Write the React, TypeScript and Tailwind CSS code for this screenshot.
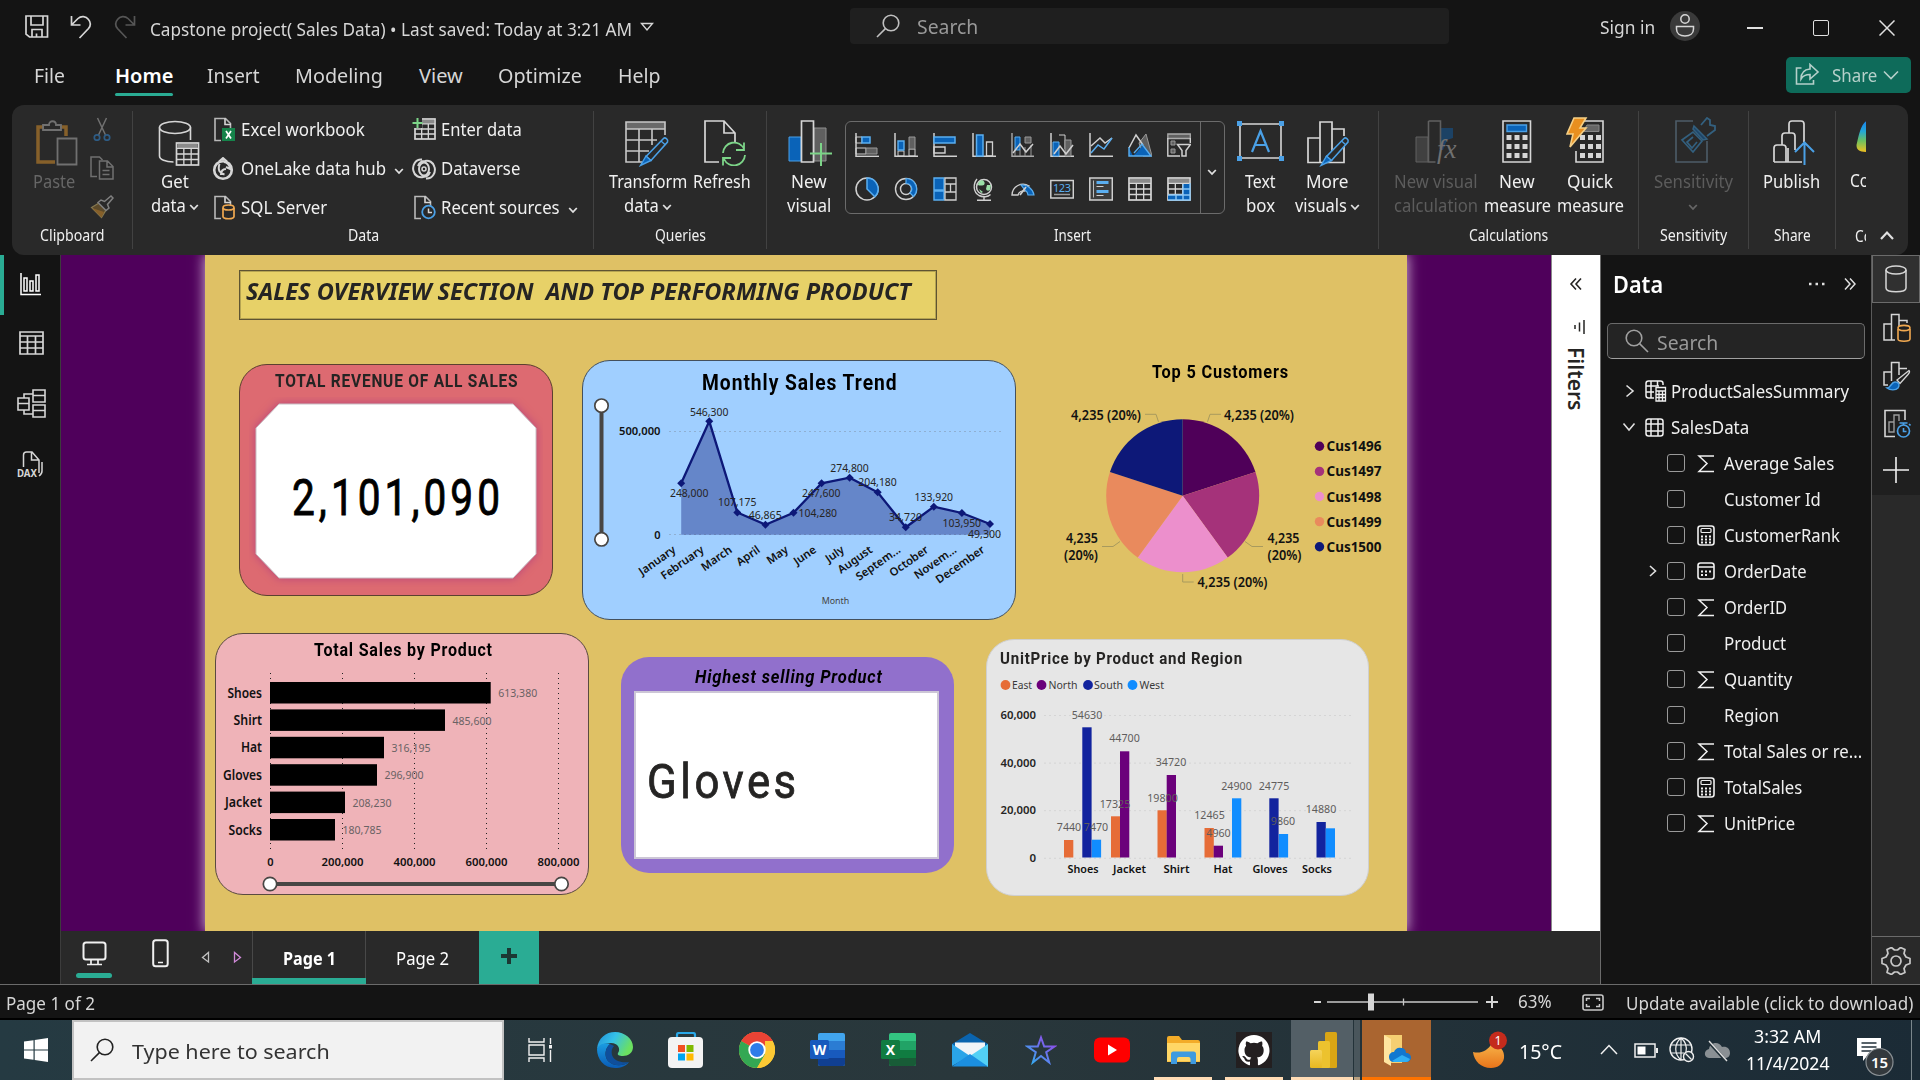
import React, { useLayoutEffect, useRef, useState } from "react";

type Kids = { children?: React.ReactNode };

/* One line of text condensed or widened so that it takes exactly w pixels. */
function Fit({ w, children, className = "" }: { w: number; className?: string } & Kids) {
  const ref = useRef<HTMLSpanElement>(null);
  const [k, setK] = useState(1);
  useLayoutEffect(() => {
    if (ref.current && ref.current.offsetWidth) setK(w / ref.current.offsetWidth);
  }, [w]);
  return (
    <span className={"inline-flex shrink-0 items-center " + className} style={{ width: w }}>
      <span ref={ref} className="shrink-0 origin-left whitespace-pre" style={{ transform: `scaleX(${k})` }}>
        {children}
      </span>
    </span>
  );
}

function S({ w, h, className = "", children }: { w: number; h: number; className?: string } & Kids) {
  return (
    <svg width={w} height={h} viewBox={`0 0 ${w} ${h}`} fill="none" className={"shrink-0 " + className}>
      {children}
    </svg>
  );
}

const Chev = ({ className = "", c = "#e0e0e0" }: { className?: string; c?: string }) => (
  <S w={10} h={8} className={className}>
    <path d="M1.2 2l3.8 4 3.8-4" stroke={c} strokeWidth="1.8" />
  </S>
);

const Lens = ({ c, flip = false }: { c: string; flip?: boolean }) => (
  <S w={24} h={24} className={flip ? "-scale-x-100" : ""}>
    <circle cx="15" cy="9" r="7.8" stroke={c} strokeWidth="1.6" />
    <path d="M9.4 14.6L1 23" stroke={c} strokeWidth="1.6" />
  </S>
);

/* ---------- title bar ---------- */

function TitleBar() {
  return (
    <div className="flex h-[54px] items-start">
      <S w={24} h={24} className="ml-[25px] mt-[15px]">
        <path d="M1 1h21.500v21H4.500L1 19.200z M6 1v9h12V1 M7 22v-7.500h10V22 M11.500 18.500V22" stroke="#d6d6d6" strokeWidth="1.700" />
      </S>
      <S w={22} h={24} className="ml-[21px] mt-[15px]">
        <path d="M1.500 1v9h9 M1.500 10L8 3.500a7 7 0 0 1 10.500 1c2.500 3 2 6.500 0 9L9.500 23" stroke="#d6d6d6" strokeWidth="1.700" />
      </S>
      <S w={22} h={24} className="ml-[22px] mt-[15px]">
        <path d="M20.500 1v9h-9 M20.500 10L14 3.500a7 7 0 0 0-10.500 1c-2.500 3-2 6.500 0 9L12.500 23" stroke="#565656" strokeWidth="1.700" />
      </S>
      <Fit w={482} className="ml-[14px] mt-[15px] h-[28px] text-[17.5px] text-[#d6d6d6]">
        Capstone project( Sales Data) • Last saved: Today at 3:21 AM
      </Fit>
      <S w={14} h={10} className="ml-[8px] mt-[22px]">
        <path d="M1.500 1.500h11L7 8z" stroke="#d6d6d6" strokeWidth="1.400" />
      </S>
      <div className="ml-[196px] mt-[8px] flex h-[36px] w-[599px] items-center rounded bg-[#1f1f1f] pl-[26px]">
        <Lens c="#c0c0c0" />
        <Fit w={61} className="ml-[17px] mt-[2px] text-[20px] text-[#999]">Search</Fit>
      </div>
      <Fit w={55} className="ml-[151px] mt-[13px] h-[28px] text-[18px] text-[#d6d6d6]">Sign in</Fit>
      <S w={30} h={30} className="ml-[15px] mt-[11px]">
        <circle cx="15" cy="15" r="15" fill="#3a3a3a" />
        <circle cx="15" cy="8" r="4.200" stroke="#d6d6d6" strokeWidth="1.500" />
        <path d="M6.500 15.500h17v2.500c0 4.500-3.500 7-8.500 7s-8.500-2.500-8.500-7z" stroke="#d6d6d6" strokeWidth="1.500" />
      </S>
      <div className="ml-[47px] mt-[27px] h-[1.500px] w-[16px] bg-[#e0e0e0]" />
      <div className="ml-[50px] mt-[20px] h-[16px] w-[16px] rounded-[2px] border-[1.500px] border-[#e0e0e0]" />
      <S w={16} h={16} className="ml-[50px] mt-[20px]">
        <path d="M.5.5l15 15M15.500.5l-15 15" stroke="#e0e0e0" strokeWidth="1.500" />
      </S>
    </div>
  );
}

function MenuBar() {
  return (
    <div className="flex h-[51px] items-start text-[20px] text-[#d6d6d6]">
      <Fit w={31} className="ml-[34px] h-[44px]">File</Fit>
      <div className="ml-[50px] flex flex-col">
        <Fit w={58} className="h-[39px] pt-[5px] font-semibold text-white">Home</Fit>
        <div className="h-[3px] rounded-sm bg-[#2aac94]" />
      </div>
      <Fit w={52} className="ml-[34px] h-[44px]">Insert</Fit>
      <Fit w={88} className="ml-[36px] h-[44px]">Modeling</Fit>
      <Fit w={44} className="ml-[36px] h-[44px]">View</Fit>
      <Fit w={84} className="ml-[35px] h-[44px]">Optimize</Fit>
      <Fit w={43} className="ml-[36px] h-[44px]">Help</Fit>
      <div className="ml-auto mr-[9px] mt-[3px] flex h-[36px] w-[125px] items-center rounded-[5px] bg-[#0e6b5a] pl-[9px] text-[18px] text-[#b5d0ca]">
        <S w={25} h={24}>
          <path d="M6.500 5H1.500v16h17v-4" stroke="#b5d0ca" strokeWidth="1.600" />
          <path d="M15 1.500l8 7.500-8 7v-4.500c-4 0-7 1-9 4.500 0-6 3.500-9.500 9-10z" stroke="#b5d0ca" strokeWidth="1.600" />
        </S>
        <Fit w={45} className="ml-[12px]">Share</Fit>
        <S w={16} h={10} className="ml-[6px]">
          <path d="M1 1.500l7 7 7-7" stroke="#b5d0ca" strokeWidth="1.600" />
        </S>
      </div>
    </div>
  );
}

/* ---------- ribbon ---------- */

const Group = ({ className, label, lw, children }: { className: string; label: string; lw: number } & Kids) => (
  <div className={"flex shrink-0 flex-col " + className}>
    <div className="flex h-[119px] items-start">{children}</div>
    <div className="flex h-[24px] justify-center text-[15.500px]">
      <Fit w={lw}>{label}</Fit>
    </div>
  </div>
);
const Rule = () => <div className="mt-[6px] h-[138px] w-px shrink-0 bg-[#424242]" />;

function Big({ className, icon, a, aw, b, bw, chev }: { className: string; icon: React.ReactNode; a: string; aw: number; b?: string; bw?: number; chev?: boolean }) {
  return (
    <div className={"flex shrink-0 flex-col items-center pt-[15px] text-[18px] leading-[24px] " + className}>
      <div className="mb-[4px] flex h-[45px] items-start justify-center">{icon}</div>
      <Fit w={aw} className="h-[24px]">{a}</Fit>
      <div className="flex h-[24px] items-center gap-[3px]">
        {b && <Fit w={bw || 40}>{b}</Fit>}
        {chev && <Chev className="mt-[3px]" c={b ? "#e0e0e0" : "#666"} />}
      </div>
    </div>
  );
}

const Row = ({ icon, w, chev, children }: { icon: React.ReactNode; w: number; chev?: boolean } & Kids) => (
  <div className="flex h-[39px] items-center">
    <div className="flex w-[24px] justify-center">{icon}</div>
    <Fit w={w} className="ml-[5px]">{children}</Fit>
    {chev && <Chev className="ml-[8px] mt-[4px]" />}
  </div>
);

const Doc = ({ children }: Kids) => (
  <S w={24} h={25}>
    <path d="M9 23.500H3V1.500h10.500l5 5V11" stroke="#b8b8b8" strokeWidth="1.600" />
    <path d="M13 1.500v6h6" stroke="#d6d6d6" strokeWidth="1.600" />
    {children}
  </S>
);

const Pencil = ({ x, y }: { x: number; y: number }) => (
  <g transform={`translate(${x} ${y})`}>
    <path d="M7 22L24.500 4c1.500-1.500 5 .8 4 3.500L12 26z" stroke="#4aa0e6" strokeWidth="1.600" fill="#292929" />
    <path d="M7 21.500l5 4.500-10.500 5z" fill="#0a63b8" stroke="#4aa0e6" strokeWidth="1.400" />
    <path d="M22 6.500l4.500 4" stroke="#4aa0e6" strokeWidth="1.400" />
  </g>
);

const IPaste = () => (
  <S w={42} h={46} className="ml-[5px]">
    <path d="M8 7H2v35h17" stroke="#86602a" strokeWidth="3.500" />
    <path d="M24 7h6v9" stroke="#86602a" strokeWidth="3.500" />
    <path d="M7 5h6c0-5 7-5 7 0h5v5H7z" stroke="#707070" strokeWidth="1.800" />
    <path d="M21.500 18.500h19v26h-19z" stroke="#707070" strokeWidth="1.800" fill="#2c2c2c" />
  </S>
);
const ICut = () => (
  <S w={24} h={24}>
    <path d="M7.500 1l8 17M16.500 1l-8 17" stroke="#707070" strokeWidth="1.500" />
    <circle cx="7" cy="20.500" r="2.700" stroke="#2e5c85" strokeWidth="1.700" />
    <circle cx="17" cy="20.500" r="2.700" stroke="#2e5c85" strokeWidth="1.700" />
  </S>
);
const ICopy = () => (
  <S w={24} h={24}>
    <path d="M7 20.500H1V1h8.500l3 3" stroke="#707070" strokeWidth="1.500" />
    <path d="M9.500 5h8l5.500 5.500V23H9.500z M17 5v6h6 M12.500 14.500h7M12.500 18.500h7" stroke="#707070" strokeWidth="1.500" />
  </S>
);
const IBrush = () => (
  <S w={24} h={24}>
    <path d="M1.500 12.500L9 8l7 7-4.500 7.500z" fill="#5c4a2a" stroke="#857850" strokeWidth="1.300" />
    <path d="M2 13l9.500 9.500L14 17z" fill="#86602a" />
    <path d="M8 7.500l3-2.500 3.500 1.500L21 1l2 2-5.500 6.500L19 13l-3 2.500z" stroke="#808080" strokeWidth="1.500" fill="#292929" />
  </S>
);

const Grid3 = ({ x, y, s, c = "#d6d6d6" }: { x: number; y: number; s: number; c?: string }) => (
  <g>
    <rect x={x} y={y} width={s} height={s} fill="#292929" stroke={c} strokeWidth="1.700" />
    <rect x={x + 1} y={y + 1} width={s - 2} height={s * 0.18} fill="#8a8a8a" />
    <path
      d={`M${x} ${y + s * 0.24}h${s}M${x} ${y + s * 0.5}h${s}M${x} ${y + s * 0.75}h${s}M${x + s / 3} ${y + s * 0.24}V${y + s}M${x + (2 * s) / 3} ${y + s * 0.24}V${y + s}`}
      stroke={c}
      strokeWidth="1.300"
    />
  </g>
);

const IGetData = () => (
  <S w={42} h={47} className="ml-[7px]">
    <ellipse cx="17" cy="7.500" rx="15.500" ry="6" stroke="#d6d6d6" strokeWidth="1.600" />
    <path d="M1.500 7.500V36c0 3.500 6 6 14 6M32.500 7.500V20" stroke="#d6d6d6" strokeWidth="1.600" />
    <Grid3 x={18.500} y={23} s={22} />
  </S>
);
const ITransform = () => (
  <S w={46} h={47}>
    <path d="M1 2h39v7H1z" fill="#6a6a6a" />
    <path d="M40 15V2H1v40h16M1 9h39M1 20h31M1 31h23M14 9v33M27 9v16" stroke="#c8c8c8" strokeWidth="1.600" />
    <Pencil x={14} y={14.500} />
  </S>
);
const IRefresh = () => (
  <S w={42} h={46} className="ml-[5px]">
    <path d="M15 42H1V1h19l11 12v9M20 1v12h11" stroke="#d6d6d6" strokeWidth="1.700" />
    <path d="M19 33a11 11 0 0 1 21-4M40 22.500V30h-8M41 35a11 11 0 0 1-21 4M19 45.500V38h8" stroke="#7cd488" strokeWidth="1.800" />
  </S>
);
const INewVisual = () => (
  <S w={45} h={46} className="ml-[2px]">
    <path d="M1 17h12v24H1z" fill="#0a63b8" stroke="#4aa0e6" strokeWidth="1" />
    <path d="M26 8h12v33H26z" fill="#606060" stroke="#909090" />
    <path d="M13.500 1h12v41h-12z" fill="#292929" stroke="#d6d6d6" strokeWidth="1.700" />
    <path d="M22 33.500h22M33 23v23" stroke="#7cd488" strokeWidth="2" />
  </S>
);
const ITextBox = () => (
  <S w={47} h={42}>
    <path d="M3 4h41v34H3z" stroke="#d6d6d6" strokeWidth="1.600" />
    <path d="M0 1h5v5H0zM42 1h5v5h-5zM0 36h5v5H0zM42 36h5v5h-5z" fill="#4aa0e6" />
    <path d="M15 32l8.500-21L32 32M18 25h11" stroke="#4aa0e6" strokeWidth="2.200" />
  </S>
);
const IMore = () => (
  <S w={46} h={47} className="ml-[6px]">
    <path d="M1 42.500V18h12v24.500zM13 42.500V2h12v30M25 9h12v7M37 26v16.500H1" stroke="#d6d6d6" strokeWidth="1.700" />
    <Pencil x={12.500} y={14.500} />
  </S>
);
const ICalcVis = () => (
  <S w={44} h={46} className="ml-[2px]">
    <path d="M1 17h12v25H1z" fill="#404040" stroke="#606060" />
    <path d="M26 8h12v10l-6 2-4 10h-2z" fill="#1c4265" />
    <path d="M13.500 1h12v28M13.500 1v41h7" stroke="#606060" strokeWidth="1.600" />
    <text x="22" y="38" fill="#707070" fontSize="27" fontStyle="italic" fontFamily="Liberation Serif, serif">fx</text>
  </S>
);
const Keys = ({ x, y }: { x: number; y: number }) => (
  <g fill="#d6d6d6">
    {[0, 9, 18].map((dy) => [0, 8, 16].map((dx) => <rect key={dx + "-" + dy} x={x + dx} y={y + dy} width="5" height="5" />))}
  </g>
);
const IMeasure = () => (
  <S w={30} h={44}>
    <path d="M1 1h27.500v41H1z" stroke="#d6d6d6" strokeWidth="1.600" />
    <path d="M5 5h19.500v6.500H5z" fill="#0a63b8" stroke="#4aa0e6" strokeWidth="1.400" />
    <Keys x={4.500} y={15} />
  </S>
);
const IQuick = () => (
  <S w={40} h={48} className="-ml-[9px] -mt-[3px]">
    <path d="M17 4h20v41H10V34" stroke="#d6d6d6" strokeWidth="1.600" />
    <path d="M21 8h12v6.500H17z" fill="#666" stroke="#888" />
    <Keys x={14} y={18} />
    <path d="M8 1h12l-6 10h6L4 30l3-13H1z" fill="#e88f1f" stroke="#f5cf85" strokeWidth="1.600" />
  </S>
);
const ISens = () => (
  <S w={42} h={48} className="-mt-[3px] ml-[6px]">
    <path d="M18 4H1v41h31V24" stroke="#4d5c68" strokeWidth="1.600" />
    <path d="M18 15l9 9-9 11-11-12z M18 20l-6 5 5 6 5-6" stroke="#33607f" strokeWidth="1.700" />
    <path d="M19 9l13 13-4 1-10-11z" fill="#1f4668" stroke="#33607f" strokeWidth="1.500" />
    <path d="M26 8l6-7 3 2v5l5 1v4l-8 6" stroke="#33607f" strokeWidth="1.800" />
  </S>
);
const IPublish = () => (
  <S w={42} h={46} className="ml-[6px]">
    <path d="M1 42V28q0-3 3-3h6q3 0 3 3v14M9 25V16q0-3 3-3h7q3 0 3 3v14M16 13V4q0-3 3-3h9q3 0 3 3v18M1 42h28M15 42V28" stroke="#d6d6d6" strokeWidth="1.700" />
    <path d="M31.500 45V23M22 32l9.500-9.500L41 32" stroke="#4aa0e6" strokeWidth="2" />
  </S>
);

const B = "#5aaef0";
const D = "#0a63b8";
const W = "#d0d0d0";
const G = "#606060";

const gallery: React.ReactNode[] = [
  <g><path d="M1 0v24" stroke={W} strokeWidth="1.500" /><path d="M1 4h6v6H1zM1 15h10v6H1z" stroke={W} /><path d="M7 4h8v6H7z" fill={D} stroke={B} strokeWidth="1.500" /><path d="M11 15h11v6H11z" fill={G} stroke="#999" /><path d="M1 23.300h23" stroke={W} strokeWidth="1.400" /></g>,
  <g><path d="M1 0v23.300h23" stroke={W} strokeWidth="1.500" /><path d="M4 18h6v5H4zM15 16h6v7h-6z" stroke={W} /><path d="M4 8h6v9H4z" fill={D} stroke={B} strokeWidth="1.400" /><path d="M15 4h6v12h-6z" fill={G} stroke="#999" /></g>,
  <g><path d="M1 0v24" stroke={W} strokeWidth="1.500" /><path d="M1 4h21v6H1z" fill={D} stroke={B} strokeWidth="1.500" /><path d="M1 14h11v6H1zM1 23.300h23" stroke={W} strokeWidth="1.400" /></g>,
  <g><path d="M1 0v23.300h23" stroke={W} strokeWidth="1.500" /><path d="M4.500 2h6.500v21H4.500z" fill={D} stroke={B} strokeWidth="1.500" /><path d="M14.500 9h6v14h-6z" stroke={W} strokeWidth="1.300" /></g>,
  <g><path d="M1 0v23.300h22" stroke="#aaa" strokeWidth="1.400" /><path d="M4 4h5v13H4z" fill={D} stroke={B} /><path d="M14 4h6v6h-6z" fill={G} stroke="#999" /><path d="M4 17v6M9 17v6M14 14v9M20 12v11" stroke="#999" /><path d="M2 20l7-9 6 8 7-8" stroke={W} strokeWidth="1.500" /></g>,
  <g><path d="M1 0v23.300h23" stroke={W} strokeWidth="1.500" /><path d="M3 9h6v14H3z" fill={D} stroke={B} /><path d="M9 2h6v14" stroke={W} /><path d="M15 7h6v16h-6z" fill={G} stroke="#999" /><path d="M4 21l6-8 6 8 7-9" stroke={W} strokeWidth="1.600" /></g>,
  <g><path d="M1 0v23.300h23" stroke={W} strokeWidth="1.500" /><path d="M2 13L11 5l5 5 7-5" stroke={W} strokeWidth="1.500" /><path d="M2 20l7-8 6 4 8-11" stroke={B} strokeWidth="1.500" /></g>,
  <g><path d="M11 10l7-9 6 22h-9z" fill={G} stroke="#999" /><path d="M1 15L8 2l7 10" stroke={W} strokeWidth="1.500" /><path d="M1 15v8h22L15 12l-6 7-4 4" fill={D} /><path d="M1 14v9h22L14 11 6 20" stroke={B} strokeWidth="1.400" /></g>,
  <g><path d="M.8 1h22.500v4.500H.8z" fill={G} stroke="#aaa" strokeWidth="1.300" /><path d="M.8 5v18H13M23.300 5v5" stroke={W} strokeWidth="1.400" /><path d="M4 8h4v4H4zM4 16h4v4H4z" fill={G} stroke="#999" /><path d="M10.500 11.500h13L19 17.500V23h-4v-5.500z" stroke={W} strokeWidth="1.500" fill="#292929" /></g>,
  <g><circle cx="12" cy="12" r="11" stroke={W} strokeWidth="1.500" /><path d="M12 1a11 11 0 0 1 7.800 18.800L12 12z" fill={D} stroke={B} strokeWidth="1.500" /></g>,
  <g><circle cx="12" cy="12" r="10.500" stroke={W} strokeWidth="1.400" /><circle cx="12" cy="12" r="5.500" stroke={W} strokeWidth="1.400" /><path d="M12 1.500a10.500 10.500 0 0 1 7.400 18L16 16a5.500 5.500 0 0 0-4-9.500z" fill={D} stroke={B} strokeWidth="1.200" /></g>,
  <g><path d="M1 1h10v12H1zM1 14h10v9H1z" fill={D} stroke={B} strokeWidth="1.400" /><path d="M12 1h11v6H12zM12 7h5.500v8H12zM17.500 7H23v8h-5.500zM12 15h11v8H12z" stroke={W} strokeWidth="1.300" /></g>,
  <g><circle cx="12" cy="10" r="7.500" stroke={W} strokeWidth="1.500" /><path d="M10 3q4 2 2 5-4 1-6 0 0-4 4-5zM15 8h4l-1 5q-3 2-4-1zM7 12l4 3-2 1z" fill="#9be0a8" /><path d="M5 2C1 7 1 15 7 18.500 11 20.500 16 20 18.500 17.500M12 20v3M5 23.300h14" stroke={W} strokeWidth="1.400" /></g>,
  <g><path d="M1 18a11 11 0 0 1 17-9l-4 5a6 6 0 0 0-7 4z" stroke={W} strokeWidth="1.400" /><path d="M10 8a12 12 0 0 1 13 10h-6a7 7 0 0 0-3-5z" fill={D} stroke={B} strokeWidth="1.200" /><path d="M9 18l6-8" stroke={W} strokeWidth="1.700" /></g>,
  <g><path d="M.8 3.500h22.500v17.500H.8z" stroke={W} strokeWidth="1.500" /><text x="3" y="14.500" fontSize="11" fill={B} fontFamily="Noto Sans, sans-serif" textLength="18">123</text><path d="M4 17.500h16" stroke="#999" strokeWidth="1.500" /></g>,
  <g><path d="M.8 1h22.500v22H.8z" stroke={W} strokeWidth="1.500" fill="#3c3c3c" /><path d="M4.500 3.500v17" stroke="#bbb" /><path d="M7.500 5.500h12M7.500 14.500h12" stroke={B} strokeWidth="3" /><path d="M7.500 9.500h7M7.500 18.500h7" stroke={W} /></g>,
  <Grid3 x={1} y={1} s={22} />,
  <g><Grid3 x={1} y={1} s={22} /><path d="M16 7h7v16H1v-5h15z" fill={D} /><path d="M1 18h22M16 7v16M9 18v5M16 12h7M1 23h22V6" stroke="#8cc8f5" strokeWidth="1.400" /></g>,
];

function Ribbon() {
  return (
    <div className="ml-[12px] flex h-[150px] w-[1896px] rounded-[12px] bg-[#292929] text-[18px] text-[#f0f0f0]">
      <Group className="w-[120px]" label="Clipboard" lw={65}>
        <Big className="ml-[19px] w-[46px] text-[#666]" icon={<IPaste />} a="Paste" aw={42} />
        <div className="ml-[13px] mt-[12px] flex flex-col gap-[15px]">
          <ICut />
          <ICopy />
          <IBrush />
        </div>
      </Group>
      <Rule />
      <Group className="w-[460px]" label="Data" lw={31}>
        <Big className="ml-[11px] w-[62px]" icon={<IGetData />} a="Get" aw={28} b="data" bw={35} chev />
        <div className="ml-[6px] mt-[5px] flex w-[200px] flex-col">
          <Row w={124} icon={<Doc><path d="M10 11h13v13H10z" fill="#15834a" /><path d="M14 14l5 7.500M19 14l-5 7.500" stroke="#fff" strokeWidth="1.700" /></Doc>}>Excel workbook</Row>
          <Row
            w={145}
            chev
            icon={
              <S w={24} h={24}>
                <circle cx="11" cy="13" r="8.800" stroke="#d6d6d6" strokeWidth="2.600" />
                <path d="M7 4.500L11 1l4 3.500M7.500 7c-2 6 0 9 5 10.500M14 12c-4 0-5 3-5 6M12 5c3 0 6 3 6 7l-4-2" stroke="#d6d6d6" strokeWidth="2" />
              </S>
            }
          >
            OneLake data hub
          </Row>
          <Row w={86} icon={<Doc><path d="M11 13v8.500c0 3 11 3 11 0V13" fill="#292929" stroke="#f0a850" strokeWidth="1.700" /><ellipse cx="16.500" cy="12.500" rx="5.500" ry="2.500" fill="#292929" stroke="#f0a850" strokeWidth="1.700" /></Doc>}>SQL Server</Row>
        </div>
        <div className="mt-[5px] flex flex-col">
          <Row
            w={81}
            icon={
              <S w={24} h={24}>
                <Grid3 x={3} y={1} s={20} />
                <path d="M0 0h10v10H0z" fill="#292929" />
                <path d="M5.500 0v10M.5 5h10" stroke="#7cd488" strokeWidth="2" />
              </S>
            }
          >
            Enter data
          </Row>
          <Row
            w={79}
            icon={
              <S w={24} h={24}>
                <ellipse cx="12" cy="12" rx="5" ry="6.500" stroke="#d6d6d6" strokeWidth="2" />
                <circle cx="12" cy="12" r="2" stroke="#d6d6d6" strokeWidth="1.500" />
                <path d="M10 2.500C3 2 0 9 1.500 14c1 5 6 7 9.500 6 3 0 6-2 7-5M14 21.500c7 .5 10-6.500 8.500-11.500C21.500 5 16.500 3 13 4c-3 0-6 2-7 5" stroke="#d6d6d6" strokeWidth="2" />
              </S>
            }
          >
            Dataverse
          </Row>
          <Row w={119} chev icon={<Doc><circle cx="16.500" cy="17" r="6.300" fill="#292929" stroke="#4aa0e6" strokeWidth="1.800" /><path d="M16.500 13.500v4h3.500" stroke="#d6d6d6" strokeWidth="1.500" /></Doc>}>Recent sources</Row>
        </div>
      </Group>
      <Rule />
      <Group className="w-[172px]" label="Queries" lw={51}>
        <Big className="ml-[14px] w-[80px]" icon={<ITransform />} a="Transform" aw={78} b="data" bw={35} chev />
        <Big className="ml-[4px] w-[60px]" icon={<IRefresh />} a="Refresh" aw={58} />
      </Group>
      <Rule />
      <Group className="w-[611px]" label="Insert" lw={37}>
        <Big className="ml-[12px] w-[60px]" icon={<INewVisual />} a="New" aw={36} b="visual" bw={44} />
        <div className="ml-[6px] mt-[16px] flex h-[93px] w-[380px] rounded-[6px] border border-[#6b6b6b]">
          <div className="grid w-[355px] shrink-0 grid-cols-[repeat(9,39px)] content-start gap-y-[20px] border-r border-[#6b6b6b] pl-[9px] pt-[11px]">
            {gallery.map((g, i) => (
              <S key={i} w={24} h={24}>{g}</S>
            ))}
          </div>
          <Chev className="ml-[6px] mt-[46px]" />
        </div>
        <Big className="ml-[11px] w-[48px]" icon={<ITextBox />} a="Text" aw={31} b="box" bw={29} />
        <Big className="ml-[7px] w-[72px]" icon={<IMore />} a="More" aw={42} b="visuals" bw={52} chev />
      </Group>
      <Rule />
      <Group className="w-[259px]" label="Calculations" lw={79}>
        <Big className="ml-[14px] w-[86px] text-[#5c5c5c]" icon={<ICalcVis />} a="New visual" aw={84} b="calculation" bw={84} />
        <Big className="ml-[3px] w-[70px]" icon={<IMeasure />} a="New" aw={36} b="measure" bw={67} />
        <Big className="ml-[3px] w-[70px]" icon={<IQuick />} a="Quick" aw={46} b="measure" bw={67} />
      </Group>
      <Rule />
      <Group className="w-[109px]" label="Sensitivity" lw={67}>
        <Big className="ml-[14px] w-[80px] text-[#5c5c5c]" icon={<ISens />} a="Sensitivity" aw={79} chev />
      </Group>
      <Rule />
      <Group className="w-[86px]" label="Share" lw={37}>
        <Big className="ml-[10px] w-[64px]" icon={<IPublish />} a="Publish" aw={57} />
      </Group>
      <Rule />
      <div className="w-[30px] overflow-hidden pl-[14px] pt-[15px]">
        <svg width="15" height="34" viewBox="0 0 15 34" className="ml-[6px]">
          <defs>
            <linearGradient id="cop" x1="0" y1="0" x2="0" y2="1">
              <stop offset="0" stopColor="#1a7ff0" />
              <stop offset=".35" stopColor="#22a6d8" />
              <stop offset=".65" stopColor="#6cc060" />
              <stop offset="1" stopColor="#f0c020" />
            </linearGradient>
          </defs>
          <path d="M12 0C5 3 3 14 .5 25c0 5 3 7 10 7h5V0z" fill="url(#cop)" />
        </svg>
        <Fit w={52} className="mt-[14px] h-[24px]">Copilot</Fit>
        <Fit w={46} className="ml-[5px] mt-[31px] h-[24px] text-[15.500px]">Copilot</Fit>
      </div>
      <S w={16} h={11} className="ml-[13px] mt-[125px]">
        <path d="M2 9l6-6.500L14 9" stroke="#e0e0e0" strokeWidth="2.200" />
      </S>
    </div>
  );
}

/* ---------- report visuals ---------- */

type TxProps = { x: number; y: number; s: number; w?: number; a?: "start" | "middle" | "end"; b?: number; c?: string; t: string };
const Tx = ({ x, y, s, w, a = "middle", b = 400, c = "#111", t }: TxProps) => (
  <text x={x} y={y + s * 0.36} fontSize={s} fontWeight={b} fill={c} textAnchor={a} textLength={w} lengthAdjust="spacingAndGlyphs">
    {t}
  </text>
);

const card = "absolute overflow-hidden";
const din = "font-['Roboto',sans-serif] tracking-[0.05em]";

function RevenueCard() {
  return (
    <div className={card + " left-[34px] top-[109px] flex h-[232px] w-[314px] flex-col items-center rounded-[28px] border border-[#5c4030] bg-[#dd6a71]"}>
      <Fit w={243} className={din + " mt-[5px] h-[22px] text-[17.500px] font-bold text-[#252423]"}>TOTAL REVENUE OF ALL SALES</Fit>
      <svg width="294" height="190" viewBox="249 397 294 190" className="mt-[5px] shrink-0">
        <path d="M279 404h234l23 24v126l-23 24H279l-23-24V428z" fill="#fff" stroke="#c8c0c4" className="drop-shadow-[0_0_4px_#b8457a]" />
        <text x="292" y="515" fontSize="50" fontFamily="Roboto" letterSpacing="5" stroke="#000" strokeWidth=".9" textLength="212" lengthAdjust="spacingAndGlyphs">2,101,090</text>
      </svg>
    </div>
  );
}

const months = ["January", "February", "March", "April", "May", "June", "July", "August", "Septem...", "October", "Novem...", "December"];
const sales = [483.3, 421.3, 512.5, 524.7, 512.7, 483.3, 477.7, 492.300, 527.300, 506.700, 513, 524];
const salesLabels: [number, number, string][] = [
  [708.7, 412.300, "546,300"], [688.7, 493.300, "248,000"], [736.7, 502.300, "107,175"], [764.700, 515.300, "46,865"],
  [817.300, 513.300, "104,280"], [820.700, 493.300, "247,600"], [849, 468.300, "274,800"], [877, 482.300, "204,180"],
  [905, 517.300, "34,720"], [933.300, 497.300, "133,920"], [961.300, 523.300, "103,950"], [984, 534, "49,300"],
];

function TrendCard() {
  const pt = (i: number) => 680.7 + i * 28.07;
  const line = sales.map((y, i) => `${pt(i)} ${y}`).join("L");
  return (
    <div className={card + " left-[376.5px] top-[105px] flex h-[260px] w-[434px] flex-col rounded-[28px] border border-[#44505c] bg-[#a0cfff]"}>
      <Fit w={196} className={din + " ml-[119px] mt-[9px] h-[26px] text-[21.500px] font-bold text-black"}>Monthly Sales Trend</Fit>
      <svg width="432" height="223" viewBox="582.5 396 432 223" className="shrink-0">
        <path d="M669 431.500H1000M669 534.500H1000" stroke="#7f8fa5" strokeDasharray="1 4" />
        <path d={`M${pt(0)} 534.700L${line}V534.700z`} fill="#0d1878" fillOpacity=".4" />
        <path d={`M${line}`} fill="none" stroke="#0d1878" strokeWidth="2.300" />
        {sales.map((y, i) => (
          <path key={i} d={`M${pt(i)} ${y - 4}l4 4-4 4-4-4z`} fill="#0d1878" />
        ))}
        {salesLabels.map(([x, y, t]) => (
          <Tx key={t} x={x} y={y} s={10.800} w={t.length * 5.500} c="#252423" t={t} />
        ))}
        <Tx x={660} y={431.300} s={11} a="end" b={600} w={41.500} t="500,000" />
        <Tx x={660} y={535} s={11} a="end" b={600} t="0" />
        {months.map((m, i) => (
          <text key={m} x={pt(i) - 4.500} y={551.500} textAnchor="end" fontSize="11.300" fontWeight="600" fill="#111" transform={`rotate(-35 ${pt(i) - 4.500} 551.500)`}>
            {m}
          </text>
        ))}
        <Tx x={835} y={601} s={9.500} w={27.500} c="#444" t="Month" />
        <path d="M601 406v133" stroke="#484644" strokeWidth="4" />
        <circle cx="601" cy="405.700" r="6.700" fill="#fff" stroke="#484644" strokeWidth="1.700" />
        <circle cx="601" cy="539.300" r="6.700" fill="#fff" stroke="#484644" strokeWidth="1.700" />
      </svg>
    </div>
  );
}

const customers = [
  { name: "Cus1496", fill: "#4f0059" },
  { name: "Cus1497", fill: "#a5327a" },
  { name: "Cus1498", fill: "#ec8fcc" },
  { name: "Cus1499", fill: "#e98a5d" },
  { name: "Cus1500", fill: "#0d1878" },
];

function CustomersPie() {
  const cx = 1182.700, cy = 495.700, r = 76.500;
  const p = (k: number) => `${cx + r * Math.sin((k * 2 * Math.PI) / 5)} ${cy - r * Math.cos((k * 2 * Math.PI) / 5)}`;
  return (
    <div className={card + " left-[845px] top-[100px] flex h-[260px] w-[350px] flex-col"}>
      <Fit w={137} className={din + " ml-[102px] mt-[4px] h-[24px] text-[18px] font-bold text-black"}>Top 5 Customers</Fit>
      <svg width="350" height="220" viewBox="1050 385 350 220" className="mt-[2px] shrink-0">
        {customers.map((c, i) => (
          <path key={c.name} d={`M${cx} ${cy}L${p(i)}A${r} ${r} 0 0 1 ${p(i + 1)}z`} fill={c.fill} />
        ))}
        <path d="M1145 414.300h11l2.500 7.500M1221 414.300h-11l-2.500 7.500M1102 546.500h11l7-5M1263 546.500h-11l-7-5M1182.700 574v8h11" fill="none" stroke="#a89a5e" />
        <Tx x={1071} y={415} s={13.500} a="start" b={600} w={70} t="4,235 (20%)" />
        <Tx x={1224} y={415} s={13.500} a="start" b={600} w={70} t="4,235 (20%)" />
        <Tx x={1197.500} y={582} s={13.500} a="start" b={600} w={70} t="4,235 (20%)" />
        <Tx x={1098} y={538} s={13.500} a="end" b={600} w={32} t="4,235" />
        <Tx x={1098} y={555} s={13.500} a="end" b={600} w={34} t="(20%)" />
        <Tx x={1267.500} y={538} s={13.500} a="start" b={600} w={32} t="4,235" />
        <Tx x={1267.500} y={555} s={13.500} a="start" b={600} w={34} t="(20%)" />
        {customers.map((c, i) => (
          <g key={c.name}>
            <circle cx="1319.500" cy={446.300 + i * 25.100} r="4.700" fill={c.fill} />
            <Tx x={1326.500} y={446.300 + i * 25.100} s={14} a="start" b={700} w={55} t={c.name} />
          </g>
        ))}
      </svg>
    </div>
  );
}

const products: [string, string, number, number][] = [
  ["Shoes", "613,380", 490.700, 34.500],
  ["Shirt", "485,600", 445, 28.500],
  ["Hat", "316,195", 384, 21],
  ["Gloves", "296,900", 377, 39],
  ["Jacket", "208,230", 345, 37],
  ["Socks", "180,785", 335, 33.500],
];

function ProductCard() {
  return (
    <div className={card + " left-[10px] top-[378px] flex h-[262px] w-[374px] flex-col rounded-[28px] border border-[#5a4a40] bg-[#efb3b8]"}>
      <Fit w={179} className={din + " ml-[98px] mt-[4px] h-[23px] text-[18px] font-bold text-black"}>Total Sales by Product</Fit>
      <svg width="372" height="233" viewBox="216 661 372 233" className="shrink-0">
        {[0, 1, 2, 3, 4].map((i) => (
          <g key={i}>
            <path d={`M${270.500 + i * 72} 673v180`} stroke="#222" strokeDasharray="1 4" />
            <Tx x={270.500 + i * 72} y={862} s={11} b={600} w={i ? 42 : undefined} t={i ? `${i * 200},000` : "0"} />
          </g>
        ))}
        {products.map(([n, v, x, w], i) => (
          <g key={n}>
            <rect x="270" y={682 + i * 27.400} width={x - 270} height="21.500" />
            <Tx x={262} y={692.700 + i * 27.400} s={13.500} a="end" b={600} w={w} t={n} />
            <Tx x={x + 7.500} y={693.200 + i * 27.400} s={11} a="start" w={39} c="#6a6264" t={v} />
          </g>
        ))}
        <path d="M270 884h291" stroke="#484644" strokeWidth="4" />
        <circle cx="270" cy="884" r="6.700" fill="#fff" stroke="#484644" strokeWidth="1.700" />
        <circle cx="561.500" cy="884" r="6.700" fill="#fff" stroke="#484644" strokeWidth="1.700" />
      </svg>
    </div>
  );
}

function BestSellerCard() {
  return (
    <div className={card + " left-[415.5px] top-[402px] flex h-[216px] w-[333px] flex-col rounded-[28px] bg-[#9170cc]"}>
      <Fit w={188} className={din + " ml-[74px] mt-[8px] h-[24px] text-[17.500px] font-bold italic text-black"}>Highest selling Product</Fit>
      <div className="ml-[13px] mt-[2px] flex h-[168px] w-[305px] items-center border-2 border-[#ccc6d6] bg-white pl-[11px] pt-[14px]">
        <Fit w={153} className="font-['Roboto',sans-serif] text-[48px] tracking-[0.08em] text-[#252423] [-webkit-text-stroke:0.8px_#252423]">Gloves</Fit>
      </div>
    </div>
  );
}

const regions: [string, string, number, number, number][] = [
  ["East", "#e66c37", 1005.500, 1012, 20],
  ["North", "#6b007b", 1041.500, 1048.500, 29],
  ["South", "#12239e", 1088, 1094, 29],
  ["West", "#118dff", 1132.500, 1139.500, 24.500],
];
const bars: [number, number, number][] = [
  [1064, 840, 0], [1082.300, 727.300, 2], [1091.800, 839.700, 3], [1111, 816.300, 0], [1120, 751.300, 1], [1157.500, 810.300, 0], [1166.700, 775, 1],
  [1204.500, 828, 0], [1213.700, 845.700, 1], [1232, 798.300, 3], [1269.300, 798.300, 2], [1278.800, 834, 3], [1316.500, 822, 2], [1325.700, 828.300, 3],
];
const barLabels: [number, number, string][] = [
  [1087, 715, "54630"], [1124.500, 738, "44700"], [1171, 762, "34720"], [1069, 827, "7440"], [1096, 827, "7470"], [1115, 804, "17325"], [1162.500, 798, "19800"],
  [1209.500, 815, "12465"], [1218.500, 833, "4960"], [1236.500, 786, "24900"], [1274, 786, "24775"], [1283, 821, "9860"], [1321, 809, "14880"],
];

function UnitPriceCard() {
  return (
    <div className={card + " left-[781px] top-[384px] flex h-[257px] w-[383px] flex-col rounded-[28px] border border-[#cfcfcf] bg-[#e6e6e6]"}>
      <Fit w={243} className={din + " ml-[13px] mt-[7px] h-[24px] text-[17px] font-bold text-[#252423]"}>UnitPrice by Product and Region</Fit>
      <svg width="381" height="220" viewBox="987 671 381 220" className="shrink-0">
        {regions.map(([n, c, x, tx, w]) => (
          <g key={n}>
            <circle cx={x} cy="685" r="4.900" fill={c} />
            <Tx x={tx} y={685} s={11.500} a="start" w={w} c="#3a3a3a" t={n} />
          </g>
        ))}
        {[60, 40, 20, 0].map((v, i) => (
          <g key={v}>
            <path d={`M1044.500 ${715.500 + i * 47.600}H1352`} stroke="#c4c4c4" strokeDasharray="1 4" />
            <Tx x={1036} y={715 + i * 47.600} s={11.500} a="end" b={600} w={v ? 35.500 : undefined} c="#252423" t={v ? `${v},000` : "0"} />
          </g>
        ))}
        {bars.map(([x, y, k], i) => (
          <rect key={i} x={x} y={y} width="9.300" height={857.500 - y} fill={regions[k][1]} />
        ))}
        {barLabels.map(([x, y, t]) => (
          <Tx key={t} x={x} y={y} s={11.500} w={t.length * 6.100} c="#5f5d5c" t={t} />
        ))}
        <Tx x={1083} y={869} s={11.500} b={600} w={31} t="Shoes" />
        <Tx x={1129.500} y={869} s={11.500} b={600} w={33} t="Jacket" />
        <Tx x={1176.500} y={869} s={11.500} b={600} w={26} t="Shirt" />
        <Tx x={1223} y={869} s={11.500} b={600} w={19} t="Hat" />
        <Tx x={1270} y={869} s={11.500} b={600} w={35} t="Gloves" />
        <Tx x={1317} y={869} s={11.500} b={600} w={30} t="Socks" />
      </svg>
    </div>
  );
}

function Report() {
  return (
    <div className="flex h-[676px] overflow-hidden bg-[#4f005b]">
      <div className="relative ml-[144px] h-full w-[1202px] bg-[#dfc165] shadow-[0_0_12px_1px_#c8a8cc]">
        <div className="absolute left-[34px] top-[15px] flex h-[50px] w-[698px] border border-[#5e5432] bg-[#e7d168] pl-[6px] shadow-[inset_0_0_0_1px_#b5a452]">
          <Fit w={665} className="h-[42px] text-[22.500px] font-bold italic text-[#252423]">{"SALES OVERVIEW SECTION  AND TOP PERFORMING PRODUCT"}</Fit>
        </div>
        <RevenueCard />
        <TrendCard />
        <CustomersPie />
        <ProductCard />
        <BestSellerCard />
        <UnitPriceCard />
      </div>
    </div>
  );
}

/* ---------- side panes ---------- */

function LeftNav() {
  return (
    <div className="flex w-[61px] shrink-0 border-r border-[#3c3c3c]">
      <div className="h-[60px] w-[4px] bg-[#2aac94]" />
      <div className="flex w-[54px] flex-col items-center">
        <S w={22} h={24} className="mt-[17px]">
          <path d="M1 1v21.500h20" stroke="#fff" strokeWidth="1.500" />
          <path d="M4 6h3v13H4zM10 9h3v10h-3zM16 3h3v16h-3z" stroke="#fff" strokeWidth="1.500" />
        </S>
        <S w={25} h={24} className="mt-[35px]">
          <path d="M1 1h23v22H1zM1 5h23M1 11h23M1 17h23M8.500 5v18M16.500 5v18" stroke="#d6d6d6" strokeWidth="1.700" />
        </S>
        <S w={29} h={29} className="mt-[34px]">
          <path d="M1 9h11v12H1zM1 14.500h11M16 1h12v12H16zM16 6.500h12M16 16h12v12H16zM16 21.500h12M7 9V5h9M7 21v4h9" stroke="#d6d6d6" strokeWidth="1.600" />
        </S>
        <S w={30} h={32} className="mt-[33px]">
          <path d="M7.500 16V4q0-3 3-3H16l7 8v13M15.500 1v8H23M26 11v9q0 3-3 5" stroke="#d6d6d6" strokeWidth="1.500" />
          <text x="1" y="25.500" fontSize="10" fontWeight="700" fill="#d6d6d6" textLength="20" lengthAdjust="spacingAndGlyphs">DAX</text>
        </S>
      </div>
    </div>
  );
}

function FiltersStrip() {
  return (
    <div className="flex h-[676px] w-[49px] flex-col items-center border-l border-[#8a8a8a] bg-white">
      <S w={14} h={14} className="mt-[22px]">
        <path d="M7 1.500L2 7l5 5.500M12 1.500L7 7l5 5.500" stroke="#252423" strokeWidth="1.600" />
      </S>
      <S w={12} h={14} className="ml-[5px] mt-[29px]">
        <path d="M11 0v14M6.500 2.500v9M2 5v4" stroke="#252423" strokeWidth="1.500" />
      </S>
      <div className="mr-px mt-[13px] w-[28px] text-[21px] font-semibold leading-[28px] text-[#252423] [writing-mode:vertical-rl]">Filters</div>
    </div>
  );
}

const Sigma = () => (
  <S w={18} h={19}>
    <path d="M17 2H2l8 7.500L2 17.500h15" stroke="#f0f0f0" strokeWidth="1.500" />
  </S>
);
const Calc = () => (
  <S w={18} h={21}>
    <rect x="1" y="1" width="16" height="19" rx="2.500" stroke="#f0f0f0" strokeWidth="1.600" />
    <rect x="4" y="3.500" width="10" height="4" rx="1" stroke="#f0f0f0" strokeWidth="1.200" />
    <path d="M4 11.500h2m2 0h2m2 0h2M4 14.500h2m2 0h2m2 0h2M4 17.500h2m2 0h2m2 0h2" stroke="#f0f0f0" strokeWidth="1.800" />
  </S>
);
const Cal = () => (
  <S w={18} h={18}>
    <rect x="1" y="1" width="16" height="16" rx="2.500" stroke="#f0f0f0" strokeWidth="1.600" />
    <path d="M1 5h16" stroke="#f0f0f0" strokeWidth="1.500" />
    <path d="M4 9.500h2m2 0h2m2 0h2M4 13h2m2 0h2" stroke="#f0f0f0" strokeWidth="1.800" />
  </S>
);

const fields: [string, string, number][] = [
  ["sum", "Average Sales", 110], ["", "Customer Id", 97], ["calc", "CustomerRank", 116], ["date", "OrderDate", 83], ["sum", "OrderID", 63],
  ["", "Product", 62], ["sum", "Quantity", 68], ["", "Region", 55], ["sum", "Total Sales or re...", 138], ["calc", "TotalSales", 78], ["sum", "UnitPrice", 71],
];

function DataPane() {
  return (
    <div className="w-[271px] shrink-0 border-l border-[#6b6b6b] text-[18px] text-[#f0f0f0]">
      <div className="flex h-[58px] items-center pl-[12px]">
        <Fit w={50} className="text-[23px] font-semibold text-white">Data</Fit>
        <S w={18} h={4} className="ml-[145px]">
          <path d="M1 2h2.500M7.500 2H10M14 2h2.500" stroke="#e0e0e0" strokeWidth="2.500" />
        </S>
        <S w={12} h={14} className="ml-[18px]">
          <path d="M1 1.500L6 7l-5 5.500M6 1.500L11 7l-5 5.500" stroke="#e0e0e0" strokeWidth="1.500" />
        </S>
      </div>
      <div className="ml-[6px] mt-[10px] flex h-[36px] w-[258px] items-center rounded-[5px] border border-[#6b6b6b] border-b-[#a0a0a0] bg-[#242424] pl-[17px]">
        <Lens c="#a0a0a0" flip />
        <Fit w={61} className="ml-[8px] mt-[3px] text-[20px] text-[#999]">Search</Fit>
      </div>
      <div className="mt-[14px] flex h-[36px] items-center pl-[24px]">
        <S w={10} h={14}><path d="M1.500 1.500L8 7l-6.500 5.500" stroke="#e0e0e0" strokeWidth="1.600" /></S>
        <S w={22} h={22} className="ml-[10px]">
          <path d="M9 18H3.500Q1 18 1 15.500v-12Q1 1 3.500 1h12Q18 1 18 3.500V5M1 6h13M1 12h8M6 1v17M12.500 1v5" stroke="#f0f0f0" strokeWidth="1.500" />
          <path d="M11 7.500h9.500V21H11zM11 11h9.500M11 14.500h9.500M11 17.500h9.500M14 11v10M17.500 11v10" stroke="#f0f0f0" strokeWidth="1.300" />
        </S>
        <Fit w={178} className="ml-[4px]">ProductSalesSummary</Fit>
      </div>
      <div className="flex h-[36px] items-center pl-[21px]">
        <S w={14} h={10}><path d="M1.500 1.500L7 8l5.500-6.500" stroke="#e0e0e0" strokeWidth="1.600" /></S>
        <S w={19} h={19} className="ml-[9px]">
          <path d="M3.500 1h12Q18 1 18 3.500v12q0 2.500-2.500 2.500h-12Q1 18 1 15.500v-12Q1 1 3.500 1zM1 6h17M1 13h17M6 1v17M13 1v17" stroke="#f0f0f0" strokeWidth="1.500" />
        </S>
        <Fit w={78} className="ml-[7px]">SalesData</Fit>
      </div>
      {fields.map(([kind, name, w]) => (
        <div key={name} className="flex h-[36px] items-center pl-[48px]">
          <div className="w-[18px] pr-px">
            {kind === "date" && <S w={8} h={12}><path d="M1 1l5.500 5L1 11" stroke="#e0e0e0" strokeWidth="1.600" /></S>}
          </div>
          <div className="h-[18px] w-[18px] rounded-[3px] border border-[#9a9a9a]" />
          <div className="ml-[12px] flex w-[18px] justify-center">
            {kind === "sum" && <Sigma />}
            {kind === "calc" && <Calc />}
            {kind === "date" && <Cal />}
          </div>
          <Fit w={w} className="ml-[9px]">{name}</Fit>
        </div>
      ))}
    </div>
  );
}

function Rail() {
  const cell = "flex h-[48px] items-center justify-center bg-[#1f1f1f]";
  return (
    <div className="flex w-[49px] shrink-0 flex-col border-l border-[#5a5a5a] bg-[#292929]">
      <div className="flex h-[48px] items-center justify-center border border-[#6b6b6b] bg-[#303030]">
        <S w={24} h={28}>
          <ellipse cx="12" cy="5" rx="10" ry="4" stroke="#d6d6d6" strokeWidth="1.500" />
          <path d="M2 5v18c0 5 20 5 20 0V5" stroke="#d6d6d6" strokeWidth="1.500" />
        </S>
      </div>
      <div className={cell}>
        <S w={28} h={30} className="ml-[2px] mt-px">
          <path d="M12 27H1V11h7.500v16M8.500 27V1.500H16V14M16 7.500h8V10" stroke="#d6d6d6" strokeWidth="1.500" />
          <path d="M15 16v10c0 3 12 3 12 0V16" stroke="#f0a850" strokeWidth="1.600" fill="#1f1f1f" />
          <ellipse cx="21" cy="15" rx="6" ry="2.600" stroke="#f0a850" strokeWidth="1.600" fill="#1f1f1f" />
        </S>
      </div>
      <div className={cell}>
        <S w={28} h={30} className="ml-[2px] mt-px">
          <path d="M5 24H1V11h7.500v9M8.500 19V1.500H16V14M16 7.500h8" stroke="#d6d6d6" strokeWidth="1.500" />
          <path d="M14 19L26 9.500q1.500 1-1 4L17 22.500z" stroke="#d6d6d6" strokeWidth="1.300" fill="#1f1f1f" />
          <path d="M4 27c4 0 4-6 8-6 4 0 5 3 3 6-2 2.500-8 2.500-11 0z" fill="#0a63b8" stroke="#4aa0e6" strokeWidth="1.400" />
        </S>
      </div>
      <div className={cell}>
        <S w={28} h={30} className="ml-[2px] mt-px">
          <path d="M12 27.500H2V1.500h20V11" stroke="#d6d6d6" strokeWidth="1.600" />
          <path d="M11 23H6V13h5zM11 13V6h5v6" stroke="#9a9a9a" strokeWidth="1.400" />
          <circle cx="20.500" cy="22" r="6" stroke="#4aa0e6" strokeWidth="1.700" />
          <path d="M16.500 14h8M20.500 14v2M26 15l1.500 1.500M20.500 19v3.500h3" stroke="#4aa0e6" strokeWidth="1.600" />
        </S>
      </div>
      <div className={cell}>
        <S w={26} h={26} className="-ml-px -mt-[2px]"><path d="M13 0v26M0 13h26" stroke="#f0f0f0" strokeWidth="1.600" /></S>
      </div>
      <div className="mt-auto flex h-[48px] items-center justify-center border-t border-[#6b6b6b]">
        <S w={30} h={28}>
          <path d="M29 11.500v5l-4 1.500-2 3.500 1 4-4.500 2-3-2.500h-3l-3 2.500-4.500-2 1-4L5 18l-4-1.500v-5L5 10l2-3.500-1-4 4.500-2 3 2.500h3l3-2.500 4.500 2-1 4L25 10z" stroke="#c8c8c8" strokeWidth="1.700" strokeLinejoin="round" />
          <circle cx="15" cy="14" r="5" stroke="#c8c8c8" strokeWidth="1.700" />
        </S>
      </div>
    </div>
  );
}

function PageTabs() {
  return (
    <div className="flex h-[53px] bg-[#292929] text-[18px] text-white">
      <div className="ml-[15px] flex w-[36px] flex-col items-center">
        <S w={25} h={25} className="mt-[10px]">
          <rect x="1.500" y="1.500" width="22" height="17" rx="2.500" stroke="#f0f0f0" strokeWidth="2" />
          <path d="M9 19v4M16 19v4M5 23.500h15" stroke="#f0f0f0" strokeWidth="1.700" />
        </S>
        <div className="mt-[7px] h-[5px] w-[36px] rounded-full bg-[#2aac94]" />
      </div>
      <S w={17} h={29} className="ml-[40px] mt-[8px]">
        <rect x="1.200" y="1.200" width="14.500" height="26" rx="2.500" stroke="#f0f0f0" strokeWidth="2" />
        <path d="M6 23.500h5" stroke="#f0f0f0" strokeWidth="1.500" />
      </S>
      <S w={9} h={13} className="ml-[32px] mt-[20px]"><path d="M7.500 1.500v9.500L1.500 6.500z" stroke="#c0c0c0" strokeWidth="1.300" /></S>
      <S w={9} h={13} className="ml-[23px] mt-[20px]"><path d="M1.500 1.500v9.500l6-4.500z" stroke="#d08ad8" strokeWidth="1.300" /></S>
      <div className="ml-[10px] flex w-[114px] flex-col items-center border-x border-[#484848]">
        <Fit w={53} className="h-[47px] pt-[8px] font-bold">Page 1</Fit>
        <div className="h-[6px] w-[114px] bg-[#2aac94]" />
      </div>
      <div className="flex w-[113px] justify-center">
        <Fit w={53} className="h-[47px] pt-[8px]">Page 2</Fit>
      </div>
      <div className="flex w-[60px] justify-center bg-[#2aac94]">
        <S w={18} h={18} className="mt-[16px]"><path d="M9 1v16M1 9h16" stroke="#1c3833" strokeWidth="4" /></S>
      </div>
    </div>
  );
}

function StatusBar() {
  return (
    <div className="flex h-[35px] items-center border-b-2 border-black text-[18px] text-[#d6d6d6]">
      <Fit w={89} className="ml-[6px] mt-[4px]">Page 1 of 2</Fit>
      <div className="ml-[1219px] h-[2px] w-[7px] bg-[#d6d6d6]" />
      <S w={151} h={20} className="ml-[6px]">
        <path d="M0 10h151M76.500 6.500v7" stroke="#c8c8c8" strokeWidth="1.300" />
        <path d="M41 1.500h6v17h-6z" fill="#d6d6d6" />
      </S>
      <S w={12} h={12} className="ml-[8px]"><path d="M6 0v12M0 6h12" stroke="#d6d6d6" strokeWidth="2" /></S>
      <Fit w={34} className="ml-[20px]">63%</Fit>
      <S w={22} h={17} className="ml-[30px] mt-[2px]">
        <rect x="1" y="1" width="20" height="15" rx="2" stroke="#c8c8c8" strokeWidth="1.600" />
        <path d="M4.500 7V4.500H8M14 4.500h3.500V7M17.500 10v2.500H14M8 12.500H4.500V10" stroke="#c8c8c8" strokeWidth="1.500" />
      </S>
      <Fit w={287} className="ml-[22px] mt-[4px]">Update available (click to download)</Fit>
    </div>
  );
}

/* ---------- taskbar ---------- */

const Office = ({ t, c }: { t: string; c: string[] }) => (
  <S w={36} h={34}>
    <rect x="8" y="0" width="27" height="33" rx="2" fill={c[0]} />
    <path d="M8 8h27v9H8z" fill={c[1]} />
    <path d="M8 17h27v8H8z" fill={c[2]} />
    <path d="M8 25h27v6q0 2-2 2H10q-2 0-2-2z" fill={c[3]} />
    <rect x="0" y="7" width="19" height="19" rx="1.500" fill={c[4]} />
    <text x="9.500" y="22" fontSize="14" fontWeight="700" fill="#fff" textAnchor="middle">{t}</text>
  </S>
);

const Slot = ({ className = "", line, children }: { className?: string; line?: string } & Kids) => (
  <div className={"flex h-[60px] shrink-0 flex-col items-center " + className}>
    <div className="flex h-[57px] items-center pb-px pt-[4px]">{children}</div>
    {line && <div className={"h-[3px] w-full " + line} />}
  </div>
);

function Taskbar() {
  return (
    <div className="flex h-[60px] bg-gradient-to-r from-[#253a42] via-[#29373b] to-[#1b2b36] text-white">
      <svg width="0" height="0" className="absolute">
        <defs>
          <linearGradient id="edgeTop" x1="0" y1="0" x2="1" y2=".4"><stop offset="0" stopColor="#1f8fd8" /><stop offset=".5" stopColor="#35c1e8" /><stop offset="1" stopColor="#6be060" /></linearGradient>
          <linearGradient id="edgeLow" x1="0" y1="0" x2="0" y2="1"><stop offset="0" stopColor="#1b9de2" /><stop offset="1" stopColor="#0a5bb5" /></linearGradient>
          <linearGradient id="starG" x1="0" y1="1" x2="1" y2="0"><stop offset="0" stopColor="#30b0f0" /><stop offset="1" stopColor="#9a40e8" /></linearGradient>
          <linearGradient id="moonG" x1="0" y1="0" x2="0" y2="1"><stop offset="0" stopColor="#f7b54a" /><stop offset="1" stopColor="#e8741a" /></linearGradient>
          <linearGradient id="pbiG" x1="0" y1="0" x2="0" y2="1"><stop offset="0" stopColor="#f5d35a" /><stop offset="1" stopColor="#e8b820" /></linearGradient>
        </defs>
      </svg>
      <S w={24} h={24} className="ml-[24px] mt-[18px]">
        <path d="M0 3.500l9.500-1.300V11.500H0zM10.700 2L24 0v11.500H10.700zM0 12.500h9.500v9.300L0 20.500zM10.700 12.500H24V24l-13.300-1.900z" fill="#fff" />
      </S>
      <div className="ml-[24px] flex h-[60px] w-[432px] items-center border-2 border-[#c2c2c2] bg-[#f2f2f2] pl-[16px]">
        <Lens c="#222" />
        <Fit w={198} className="ml-[18px] mt-[3px] text-[20.500px] text-[#333]">Type here to search</Fit>
      </div>
      <S w={25} h={24} className="ml-[24px] mt-[18px]">
        <path d="M1 0v4h15V0M1 7h15v10H1zM1 24v-4h15v4M22.500 0v6M22.500 12v12" stroke="#f0f0f0" strokeWidth="1.400" />
        <path d="M21 7h3v3.500h-3z" fill="#f0f0f0" />
      </S>
      <Slot className="ml-[42px] w-[40px]">
        <S w={36} h={36}>
          <path d="M0 17C1 6 9 0 18 0c10 0 18 7 18 15 0 6-5 9-10 9-4 0-6-1-5-3 3-4 0-10-7-10C7 11 2 14 0 17z" fill="url(#edgeTop)" />
          <path d="M0 17c2-5 8-7 13-5-5 4-6 12-2 17 5 5 14 6 21 1-3 4-8 6-14 6C7 36 0 27 0 17z" fill="url(#edgeLow)" />
          <path d="M13 12c-5 4-6 12-2 17 5 5 14 6 21 1-8 1-15-1-17-7-1-4 0-7 2-9z" fill="#0f4f9c" />
        </S>
      </Slot>
      <Slot className="ml-[31px] w-[40px]">
        <S w={36} h={36}>
          <path d="M9 8V2.500Q9 1 11 1h14q2 0 2 1.500V8" stroke="#2aa8e8" strokeWidth="2.200" />
          <rect x="0" y="5" width="35" height="31" rx="4" fill="#f3f3f3" />
          <path d="M10 13h7v7h-7z" fill="#f25022" /><path d="M18.500 13h7v7h-7z" fill="#7fba00" /><path d="M10 21.500h7v7h-7z" fill="#00a4ef" /><path d="M18.500 21.500h7v7h-7z" fill="#ffb900" />
        </S>
      </Slot>
      <Slot className="ml-[31px] w-[40px]">
        <S w={36} h={36}>
          <circle cx="18" cy="18" r="18" fill="#fcc934" />
          <path d="M18 18L2.400 9A18 18 0 0 1 33.600 9z" fill="#ea4335" />
          <path d="M18 18L2.400 9A18 18 0 0 0 18 36l8-13.500z" fill="#34a853" />
          <path d="M18 36l8-13.500L26 9h7.600A18 18 0 0 1 18 36z" fill="#fcc934" />
          <path d="M10 13L2.400 9A18 18 0 0 1 33.600 9H18z" fill="#ea4335" />
          <circle cx="18" cy="18" r="8.700" fill="#fff" /><circle cx="18" cy="18" r="6.900" fill="#2f7de9" />
        </S>
      </Slot>
      <Slot className="ml-[31px] w-[40px]"><Office t="W" c={["#41a5ee", "#2b7cd3", "#185abd", "#103f91", "#185abd"]} /></Slot>
      <Slot className="ml-[31px] w-[40px]"><Office t="X" c={["#33c481", "#21a366", "#107c41", "#185c37", "#107c41"]} /></Slot>
      <Slot className="ml-[31px] w-[40px]">
        <S w={36} h={34}>
          <path d="M0 11L18 0l18 11v6H0z" fill="#0a64ae" />
          <path d="M3 9.500h30v15H3z" fill="#f0f4f8" />
          <path d="M0 11l18 12L0 33z" fill="#2aa4e8" /><path d="M36 11L18 23l18 11z" fill="#52d0f5" /><path d="M0 33.500L18 21l18 12.500z" fill="#1b8fe0" />
        </S>
      </Slot>
      <Slot className="ml-[31px] w-[40px]">
        <S w={32} h={30}>
          <path d="M16 2.500l3.200 9h10.300l-8.300 5.700 3 10.300-8.200-6.500-8.200 6.500 3-10.300L2.500 11.500h10.300z" stroke="url(#starG)" strokeWidth="2" />
        </S>
      </Slot>
      <Slot className="ml-[31px] w-[40px]">
        <S w={36} h={26}><rect width="36" height="25" y=".5" rx="6" fill="#f00" /><path d="M14 7.500l9 5.500-9 5.500z" fill="#fff" /></S>
      </Slot>
      <Slot className="ml-[22px] w-[58px]" line="bg-[#ffdcb5]">
        <S w={33} h={28}>
          <path d="M0 2q0-2 2-2h10l3 4h16q2 0 2 2v20H0z" fill="#f3ac28" />
          <path d="M0 7h33v17q0 1.500-1.500 1.500H0z" fill="#ffd766" />
          <path d="M4 28V18q0-2.500 2.500-2.500h20q2.500 0 2.500 2.500v10h-5.500v-5q0-2-2-2h-9.500q-2 0-2 2v5z" fill="#3f9be0" />
        </S>
      </Slot>
      <Slot className="ml-[13px] w-[58px]" line="bg-[#ffdcb5]">
        <S w={36} h={36}>
          <path d="M0 0h36v36H0z" fill="#231f20" />
          <path d="M18 3a15.500 15.500 0 0 0-5 30.200c.8.200 1-.3 1-.8v-3c-4 1-5.200-1.500-5.500-2.500-.5-1-1-1.500-1.800-2-.7-.4 0-1 .8-.9 1.500.2 2.300 1.500 2.800 2.200 1 1.700 2.700 1.800 4 1.200.1-1 .5-1.600 1-2-3.500-.4-6.800-2-6.800-7.500 0-1.700.6-3 1.600-4.200-.3-.8-.6-2.300.1-4.200 0 0 1.500-.3 4.300 1.700a14 14 0 0 1 7 0C24.500 9.200 26 9.500 26 9.500c.7 1.900.4 3.400.1 4.200a6 6 0 0 1 1.600 4.200c0 5.600-3.300 7-6.800 7.500.6.500 1 1.500 1 2.800v4.200c0 .5.300 1 1 .8A15.500 15.500 0 0 0 18 3z" fill="#fff" />
        </S>
      </Slot>
      <Slot className="ml-[8px] w-[62px] bg-[#535f66]" line="bg-[#ffdcb5]">
        <S w={28} h={36} className="ml-[3px]">
          <rect x="15" y="0" width="12" height="36" rx="1.500" fill="#d9a514" /><rect x="8" y="9" width="12" height="27" rx="1.500" fill="#ecc22e" /><rect x="0" y="18" width="12" height="18" rx="1.500" fill="url(#pbiG)" />
        </S>
      </Slot>
      <Slot className="ml-px w-[6px] bg-[#4a565c]" line="bg-[#b8a080]" />
      <Slot className="ml-[2px] w-[69px] bg-[#aa6530]" line="bg-[#ff7300]">
        <S w={29} h={32} className="ml-[3px]">
          <path d="M0 1h18v28H5z" fill="#f5cf72" /><path d="M0 1l7 4v27l-7-4z" fill="#ffe5a0" />
          <path d="M10 28c-3 0-5-2-5-5s2-5 5-5c1-3 4-5 7-4 3 0 5 2 5 5 3 0 5 2 5 4.500S25 28 22 28z" fill="#1278d0" /><path d="M8 27l10-6 8 4c-1 2-2 3-4 3H10z" fill="#30b0f5" />
        </S>
      </Slot>
      <S w={36} h={40} className="ml-[41px] mt-[11px]">
        <path d="M1 21c7 2 15-1 19-9 8 2 13 8 12 15-1 6-6 10-13 10C9 37 2 30 1 21z" fill="url(#moonG)" />
        <circle cx="26" cy="9.500" r="9" fill="#c42b1c" />
        <text x="26" y="14" fontSize="12.500" fill="#fff" textAnchor="middle">1</text>
      </S>
      <Fit w={43} className="ml-[11px] mt-[3px] text-[20px]">15°C</Fit>
      <S w={18} h={11} className="ml-[38px] mt-[24px]"><path d="M1 10l8-8.500L17 10" stroke="#f0f0f0" strokeWidth="1.500" /></S>
      <S w={25} h={15} className="ml-[16px] mt-[23px]">
        <path d="M1 1h20v13H1z" stroke="#f0f0f0" strokeWidth="1.500" /><path d="M3.500 3.500h8v8h-8z" fill="#fff" /><path d="M23 5v5" stroke="#f0f0f0" strokeWidth="2" />
      </S>
      <S w={26} h={26} className="ml-[10px] mt-[17px]">
        <circle cx="12" cy="12" r="11" stroke="#f0f0f0" strokeWidth="1.400" />
        <path d="M12 1C5 7 5 17 12 23M12 1c5 4 6 9 5 14M1.500 8h21M1.500 16H15M12 1v22" stroke="#f0f0f0" strokeWidth="1.200" />
        <circle cx="19.500" cy="19.500" r="5" fill="#22313a" stroke="#f0f0f0" strokeWidth="1.400" /><path d="M16.500 16.500l6 6" stroke="#f0f0f0" strokeWidth="1.300" />
      </S>
      <S w={27} h={22} className="ml-[9px] mt-[20px]">
        <path d="M5 18c-6-1-5-8 0-9 1-7 10-8 13-2 5-1 8 2 8 6 0 3-2 5-5 5z" fill="#8a9094" /><path d="M4 1l18 20" stroke="#1f2e36" strokeWidth="3" /><path d="M5 1l18 20" stroke="#e0e0e0" strokeWidth="1.400" />
      </S>
      <div className="ml-[14px] flex w-[84px] flex-col items-center pt-[3px] text-[18px] leading-[27px]">
        <Fit w={67} className="h-[27px]">3:32 AM</Fit>
        <Fit w={83} className="h-[27px]">11/4/2024</Fit>
      </div>
      <S w={40} h={42} className="ml-[28px] mt-[16px]">
        <path d="M0 2h24v18H10l-4 5v-5H0z" fill="#fff" /><path d="M4.500 7h15M4.500 11h15M4.500 15h10" stroke="#22313a" strokeWidth="1.300" />
        <circle cx="22.500" cy="26" r="13.500" fill="#33393d" stroke="#8a9094" strokeWidth="1.200" />
        <text x="22.500" y="31.500" fontSize="15" fontWeight="600" fill="#fff" textAnchor="middle">15</text>
      </S>
      <div className="ml-[14px] w-px bg-[#7a868c]" />
    </div>
  );
}

export default function App() {
  return (
    <div className="flex h-[1080px] w-[1920px] flex-col overflow-hidden bg-[#141414] font-['Noto_Sans','Open_Sans',sans-serif]">
      <TitleBar />
      <MenuBar />
      <Ribbon />
      <div className="flex h-[730px] border-b border-[#6b6b6b]">
        <LeftNav />
        <div className="flex w-[1539px] shrink-0 flex-col">
          <div className="flex">
            <div className="w-[1490px]"><Report /></div>
            <FiltersStrip />
          </div>
          <PageTabs />
        </div>
        <DataPane />
        <Rail />
      </div>
      <StatusBar />
      <Taskbar />
    </div>
  );
}
